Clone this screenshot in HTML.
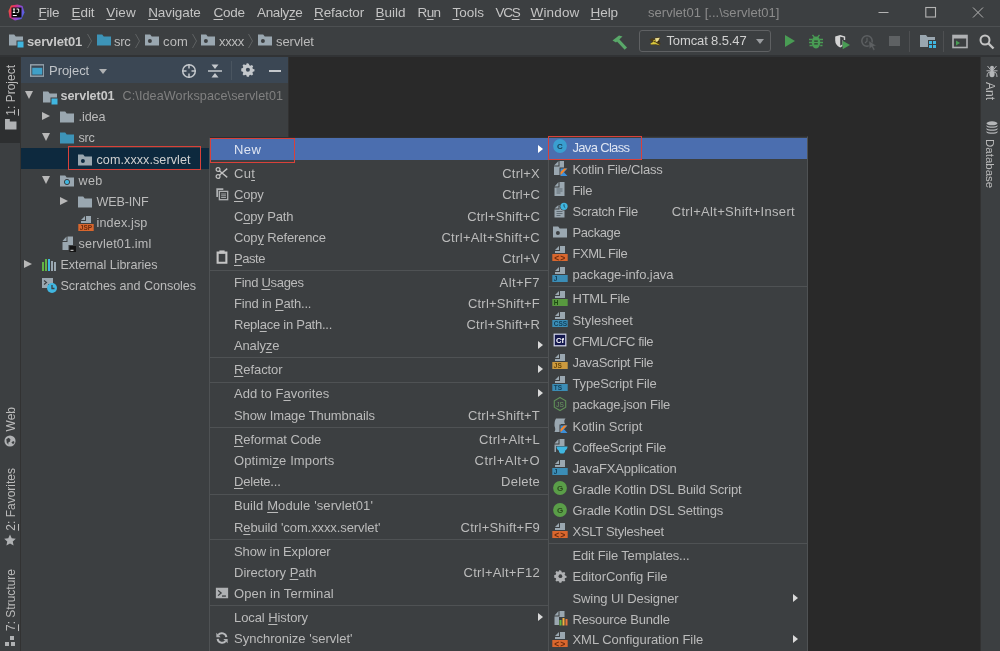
<!DOCTYPE html><html><head><meta charset="utf-8"><title>servlet01</title><style>
*{box-sizing:border-box;margin:0;padding:0}
html,body{width:1000px;height:651px;overflow:hidden;background:#3c3f41}
body{font-family:"Liberation Sans","DejaVu Sans",sans-serif;font-size:13px;color:#bbbbbb;position:relative}
u{text-decoration:underline;text-underline-offset:2px;text-decoration-thickness:1px}
#menubar,#nav,#lstripe,#rstripe,#proj,#ctx,#sub{will-change:transform}
.abs{position:absolute}
.tr{font-size:12.6px}
.t{position:absolute;white-space:nowrap;line-height:20px;height:20px}
#menubar{position:absolute;left:0;top:0;width:1000px;height:27px;background:#3c3f41}
#menubar .t{top:3px;font-size:13.5px;color:#c4c4c4}
#nav{position:absolute;left:0;top:26px;width:1000px;height:31px;background:#3c3f41;border-top:1px solid #4d5052;border-bottom:2px solid #313335}
#lstripe{position:absolute;left:0;top:57px;width:21px;height:594px;background:#3c3f41;border-right:1px solid #323232}
#rstripe{position:absolute;left:980px;top:57px;width:20px;height:594px;background:#3c3f41;border-left:1px solid #323232}
#editor{position:absolute;left:289px;top:57px;width:691px;height:594px;background:#292929}
#proj{position:absolute;left:21px;top:57px;width:268px;height:594px;background:#3c3f41;border-right:1px solid #323232}
#projhead{position:absolute;left:0;top:0;width:267px;height:26px;background:#3b4754}
.vt{position:absolute;white-space:nowrap;font-size:12px;color:#bbbbbb;line-height:14px;writing-mode:vertical-rl}
.vl{transform:rotate(180deg)}
.vt u{text-underline-offset:0px}
#ctx{position:absolute;left:209px;top:137px;width:340px;height:520px;background:#3c3f41;border:1px solid #4f5254;border-top-color:#2e2f30}
#sub{position:absolute;left:548px;top:136px;width:260px;height:520px;background:#3c3f41;border:1px solid #4f5254;border-top-color:#2e2f30}
#sub .mi .l{left:23.5px}
.mi{position:absolute;left:0;right:0;height:21px}
.mi .l{position:absolute;left:24px;top:0;line-height:21px;white-space:nowrap;color:#bbbbbb}
.mi .r{position:absolute;right:8px;top:0;line-height:21px;white-space:nowrap;color:#bbbbbb}
.mi.sel{background:#4b6eaf}
.mi.sel .l{color:#dfe5f2}
.mi.sel .arr{border-left-color:#ffffff}
.sep{position:absolute;left:0;right:0;height:1px;background:#4f5254}
.arr{position:absolute;right:5px;top:6px;width:0;height:0;border-left:5px solid #dadada;border-top:4.5px solid transparent;border-bottom:4.5px solid transparent}
.ic{position:absolute;left:5px;top:2.8px;width:14px;height:14px}
#sub .ic{left:3px;top:1.5px;width:16px;height:16px}
.redbox{position:absolute;border:1px solid #d9413a}
</style></head><body>
<div id="menubar">
<svg class="abs" style="left:7.500px;top:3.500px" width="17" height="17" viewBox="0 0 17 17"><defs><linearGradient id="lg1" x1="0" y1="0.300" x2="1" y2="0.700"><stop offset="0" stop-color="#f0573a"/><stop offset=".25" stop-color="#e2306a"/><stop offset=".55" stop-color="#9a44c8"/><stop offset="1" stop-color="#4468e8"/></linearGradient></defs><path d="M3 1.500L9.500 .500 14.500 2 16.500 8.500 13.500 15 7 16.500 1.500 13.500 .500 7z" fill="url(#lg1)"/><rect x="3.500" y="3.500" width="10" height="10" fill="#0c0c0c"/><rect x="4.800" y="11" width="4" height="1" fill="#fff"/><path d="M4.800 5h2.400M6 5v3.500M4.800 8.500h2.400" stroke="#fff" stroke-width="1" fill="none"/><path d="M8.500 5h2.200v2.600q0 1-1.200 1h-.8" stroke="#fff" stroke-width="1" fill="none"/></svg>
<div class="t" id="f1" style="left:38.6px;letter-spacing:-0.293px;"><u>F</u>ile</div>
<div class="t" id="f2" style="left:71.6px;letter-spacing:-0.097px;"><u>E</u>dit</div>
<div class="t" id="f3" style="left:106.3px;letter-spacing:0.117px;"><u>V</u>iew</div>
<div class="t" id="f4" style="left:148.2px;letter-spacing:-0.088px;"><u>N</u>avigate</div>
<div class="t" id="f5" style="left:213.5px;letter-spacing:-0.271px;"><u>C</u>ode</div>
<div class="t" id="f6" style="left:257.0px;letter-spacing:-0.364px;">Analy<u>z</u>e</div>
<div class="t" id="f7" style="left:314.0px;letter-spacing:-0.129px;"><u>R</u>efactor</div>
<div class="t" id="f8" style="left:375.5px;letter-spacing:-0.006px;"><u>B</u>uild</div>
<div class="t" id="f9" style="left:417.5px;letter-spacing:-0.594px;">R<u>u</u>n</div>
<div class="t" id="f10" style="left:452.5px;letter-spacing:-0.006px;"><u>T</u>ools</div>
<div class="t" id="f11" style="left:495.5px;letter-spacing:-1.255px;">VC<u>S</u></div>
<div class="t" id="f12" style="left:530.5px;letter-spacing:0.164px;"><u>W</u>indow</div>
<div class="t" id="f13" style="left:590.5px;letter-spacing:-0.070px;"><u>H</u>elp</div>
<div class="t" id="f14" style="left:648px;color:#8c8c8c;font-size:13px;letter-spacing:0.028px;">servlet01 [...\servlet01]</div>
<svg class="abs" style="left:870px;top:-0.800px" width="130" height="27" viewBox="0 0 130 27"><path d="M8.500 13.500h10" stroke="#b4b4b4" stroke-width="1"/><rect x="55.800" y="8.500" width="9.700" height="9.500" fill="none" stroke="#b4b4b4" stroke-width="1.100"/><path d="M103 8.500l10 10M113 8.500l-10 10" stroke="#b4b4b4" stroke-width="1"/></svg>
</div>
<div id="nav">
<svg class="abs" style="left:8px;top:5px" width="16" height="16" viewBox="0 0 16 16"><path d="M1 2.5h5.2l1.5 2H15v9H1z" fill="#9aa7b0"/><rect x="8.5" y="8.5" width="7.5" height="7.5" fill="#3c3f41"/><rect x="9.5" y="9.5" width="6" height="6" fill="#40b6e0"/></svg>
<div class="t" id="f15" style="left:27px;top:5px;font-weight:bold;color:#c8c8c8;letter-spacing:-0.142px;">servlet01</div>
<svg class="abs" style="left:96px;top:5px" width="16" height="16" viewBox="0 0 16 16"><path d="M1 2.5h5.2l1.5 2H15v9H1z" fill="#3d94b8"/></svg>
<div class="t" id="f16" style="left:114px;top:5px;letter-spacing:-0.246px;">src</div>
<svg class="abs" style="left:144px;top:5px" width="16" height="16" viewBox="0 0 16 16"><path d="M1 2.5h5.2l1.5 2H15v9H1z" fill="#9aa7b0"/><circle cx="5.900" cy="8.900" r="2" fill="#3c3f41"/></svg>
<div class="t" id="f17" style="left:163px;top:5px;letter-spacing:0.176px;">com</div>
<svg class="abs" style="left:200px;top:5px" width="16" height="16" viewBox="0 0 16 16"><path d="M1 2.5h5.2l1.5 2H15v9H1z" fill="#9aa7b0"/><circle cx="5.900" cy="8.900" r="2" fill="#3c3f41"/></svg>
<div class="t" id="f18" style="left:219px;top:5px;letter-spacing:-0.227px;">xxxx</div>
<svg class="abs" style="left:257px;top:5px" width="16" height="16" viewBox="0 0 16 16"><path d="M1 2.5h5.2l1.5 2H15v9H1z" fill="#9aa7b0"/><circle cx="5.900" cy="8.900" r="2" fill="#3c3f41"/></svg>
<div class="t" id="f19" style="left:276px;top:5px;letter-spacing:-0.056px;">servlet</div>
<svg class="abs" style="left:86px;top:4px" width="8" height="20" viewBox="0 0 8 20"><path d="M1.5 3l4 7-4 7" fill="none" stroke="#5e6162" stroke-width="1"/></svg>
<svg class="abs" style="left:134px;top:4px" width="8" height="20" viewBox="0 0 8 20"><path d="M1.5 3l4 7-4 7" fill="none" stroke="#5e6162" stroke-width="1"/></svg>
<svg class="abs" style="left:191px;top:4px" width="8" height="20" viewBox="0 0 8 20"><path d="M1.5 3l4 7-4 7" fill="none" stroke="#5e6162" stroke-width="1"/></svg>
<svg class="abs" style="left:247px;top:4px" width="8" height="20" viewBox="0 0 8 20"><path d="M1.5 3l4 7-4 7" fill="none" stroke="#5e6162" stroke-width="1"/></svg>
<div class="abs" style="left:0;top:0.5px;width:1000px;height:0">
<svg class="abs" style="left:611px;top:5px" width="18" height="18" viewBox="0 0 18 18"><path d="M1.500 7.500L8 2.500l3.500 1L5 9.500z" fill="#59a869"/><path d="M7.800 5.800l8.200 8.700-2.300 2.300L5.500 8z" fill="#59a869"/></svg>
<div class="abs" style="left:639px;top:2px;width:132px;height:22px;border:1px solid #5f6163;border-radius:3px"></div>
<svg class="abs" style="left:649px;top:9.500px" width="12" height="9.500" viewBox="0 0 12 9.500"><path d="M.500 2.500l3-1.500 2 1L7 .300h4.500L10 4l1.500 2.500-1 2.500-4-1.500-5 .500L3 5z" fill="#4a3a18"/><path d="M1.500 6.500l3.500-2 2 1.200L11 8.300l-4.200-1L1.800 7.500z" fill="#d8c83c"/><path d="M6 1.200l4.800-.400L9 4.300 6.800 5z" fill="#e8dc90"/><path d="M4 3.500l2-.800.800 2.500-1.500.300z" fill="#c8b030"/><circle cx="5.800" cy="4.600" r=".600" fill="#1a1208"/><circle cx="9.800" cy="4.600" r=".600" fill="#1a1208"/></svg>
<div class="t" id="f20" style="left:666.5px;top:3.5px;color:#d0d0d0;letter-spacing:-0.128px;">Tomcat 8.5.47</div>
<div class="abs" style="left:756px;top:11px;width:0;height:0;border-top:5px solid #9a9da0;border-left:4.5px solid transparent;border-right:4.5px solid transparent"></div>
<svg class="abs" style="left:783px;top:6px" width="14" height="14" viewBox="0 0 14 14"><path d="M2 1l10 6-10 6z" fill="#499c54"/></svg>
<svg class="abs" style="left:808px;top:6px" width="16" height="16" viewBox="0 0 16 16"><path d="M4.500 1l1.800 2.200M11.500 1L9.700 3.200" stroke="#499c54" stroke-width="1.300"/><path d="M8 2.500c2.800 0 4.200 2 4.200 5.500S10.800 14.500 8 14.500 3.800 11.500 3.800 8 5.200 2.500 8 2.500z" fill="#499c54"/><path d="M1 5.500h14M1 8.500h14M1.500 11.500h13" stroke="#499c54" stroke-width="1.600" stroke-dasharray="3.300 7.400 3.300 20"/><path d="M6.200 7.200h3.600M6.200 9.800h3.600" stroke="#2f3a31" stroke-width="1.300"/></svg>
<svg class="abs" style="left:834px;top:6px" width="17" height="17" viewBox="0 0 17 17"><path d="M1.200 2.500l5-1.500 5 1.500v3.500H8.500v6.200L6.200 13.500Q1.200 11 1.200 6.500z" fill="#d4d4d4"/><path d="M6.200 2.800v9l2-1.200V6h1.600V3.500z" fill="#3c3f41"/><path d="M8.700 6.800l7.300 4.200-7.300 4.200z" fill="#499c54"/></svg>
<svg class="abs" style="left:860px;top:6px" width="18" height="18" viewBox="0 0 18 18"><circle cx="7" cy="7" r="5.200" fill="none" stroke="#5d6062" stroke-width="1.500"/><path d="M7 3.800v3.400L5 9" stroke="#5d6062" stroke-width="1.200" fill="none"/><path d="M8.800 6.700l7.700 5-3.200.600 1.800 3.300-1.700.900-1.800-3.400-2.300 2z" fill="#5d6062" stroke="#3c3f41" stroke-width=".6"/></svg>
<div class="abs" style="left:889px;top:8px;width:10.5px;height:10px;background:#5e6163"></div>
<div class="abs" style="left:909px;top:3px;width:1px;height:21px;background:#4e5052"></div>
<svg class="abs" style="left:920px;top:6px" width="17" height="15" viewBox="0 0 17 15"><path d="M0 1h6l1.500 2H15v10H0z" fill="#9aa7b0"/><rect x="8" y="6" width="8" height="8" fill="#3c3f41"/><rect x="9" y="7" width="3" height="3" fill="#40b6e0"/><rect x="13" y="7" width="3" height="3" fill="#40b6e0"/><rect x="9" y="11" width="3" height="3" fill="#40b6e0"/><rect x="13" y="11" width="3" height="3" fill="#40b6e0"/></svg>
<div class="abs" style="left:943px;top:3px;width:1px;height:21px;background:#4e5052"></div>
<svg class="abs" style="left:952px;top:6px" width="16" height="15" viewBox="0 0 16 15"><rect x="1" y="1.500" width="14" height="12" fill="none" stroke="#afb1b3" stroke-width="1.600"/><rect x="1" y="1.500" width="14" height="3" fill="#afb1b3"/><path d="M4 6.500l4 2.500-4 2.500z" fill="#499c54"/></svg>
<svg class="abs" style="left:978px;top:5px" width="17" height="17" viewBox="0 0 17 17"><circle cx="7" cy="7" r="4.500" fill="none" stroke="#c4c4c4" stroke-width="2"/><path d="M10.500 10.500l5 5" stroke="#c4c4c4" stroke-width="2.400"/></svg>
</div>
</div>
<div id="lstripe">
<div class="abs" style="left:0;top:0;width:20px;height:86px;background:#2d2f30"></div>
<div class="vt vl" id="vt1" style="left:4px;top:8px"><u>1</u>: Project</div>
<svg class="abs" style="left:5px;top:62px" width="11.500" height="10.500" viewBox="0 0 12 11"><path d="M0 0h5v2.500h7V11H0z" fill="#afb1b3"/></svg>
<div class="vt vl" id="vt2" style="left:4px;top:350px">Web</div>
<svg class="abs" style="left:4px;top:378px" width="12" height="12" viewBox="0 0 13 13"><circle cx="6.500" cy="6.500" r="6" fill="#afb1b3"/><path d="M2.500 4.500l2.500-1.500 2 1.500-.500 2.500-2 1.500 .500 2-2-2zM8 8l2-1.500 1.500 1-1.500 2.500z" fill="#3c3f41"/></svg>
<div class="vt vl" id="vt3" style="left:4px;top:411px"><u>2</u>: Favorites</div>
<svg class="abs" style="left:4px;top:477px" width="12" height="12" viewBox="0 0 14 14"><path d="M7 .500l2 4.500 4.800.500-3.600 3.200 1 4.800L7 11l-4.200 2.500 1-4.800L.200 5.500 5 5z" fill="#afb1b3"/></svg>
<div class="vt vl" id="vt4" style="left:4px;top:512px"><u>7</u>: Structure</div>
<svg class="abs" style="left:5px;top:579px" width="10" height="10" viewBox="0 0 10 10"><rect x="5" y="0" width="4" height="4" fill="#afb1b3"/><rect x="0" y="6" width="4" height="4" fill="#afb1b3"/><rect x="6" y="6" width="4" height="4" fill="#afb1b3"/></svg>
</div>
<div id="rstripe">
<svg class="abs" style="left:4.500px;top:7.500px" width="12" height="13" viewBox="0 0 12 13"><circle cx="6" cy="2.800" r="2" fill="#b4b6b8"/><ellipse cx="6" cy="9" rx="2.600" ry="3.300" fill="#b4b6b8"/><rect x="5" y="3.500" width="2" height="3.500" fill="#b4b6b8"/><path d="M1.500 1l3.300 4M10.500 1L7.200 5M.500 5.800h11M4.500 7C2 7 1.200 8.500 1 12M7.500 7c2.500 0 3.300 1.500 3.500 5" stroke="#b4b6b8" stroke-width="1" fill="none"/></svg>
<div class="vt" id="vt5" style="left:2px;top:25px">Ant</div>
<svg class="abs" style="left:4.500px;top:63.500px" width="12" height="13" viewBox="0 0 12 13"><ellipse cx="6" cy="2.300" rx="5.500" ry="2" fill="#b4b6b8"/><path d="M.500 4c1 2 10 2 11 0v1.200c-1 2-10 2-11 0zM.500 7c1 2 10 2 11 0v1.200c-1 2-10 2-11 0zM.500 10c1 2 10 2 11 0v1.200c-1 2-10 2-11 0z" fill="#b4b6b8"/></svg>
<div class="vt" id="vt6" style="left:2px;top:82px;font-size:11.5px">Database</div>
</div>
<div id="editor"></div>
<div id="proj">
<div id="projhead">
<svg class="abs" style="left:8.500px;top:6.500px" width="14.500" height="13" viewBox="0 0 16 14"><rect x="0.750" y="0.750" width="14.500" height="12.500" fill="none" stroke="#9aa7b0" stroke-width="1.500"/><rect x="2.500" y="4" width="11" height="7.500" fill="#40a0c8"/></svg>
<div class="t" id="f21" style="left:28px;top:4px;color:#c0c4c8;letter-spacing:-0.038px;">Project</div>
<div class="abs" style="left:77.500px;top:12px;width:0;height:0;border-top:5px solid #afb1b3;border-left:4.500px solid transparent;border-right:4.500px solid transparent"></div>
<svg class="abs" style="left:160px;top:6px" width="16" height="16" viewBox="0 0 16 16"><circle cx="8" cy="8" r="6.300" fill="none" stroke="#c4c8cc" stroke-width="1.500"/><path d="M8 1v4.500M8 10.500V15M1 8h4.500M10.500 8H15" stroke="#c4c8cc" stroke-width="1.500"/></svg>
<svg class="abs" style="left:186px;top:6px" width="16" height="16" viewBox="0 0 16 16"><path d="M1 8h14" stroke="#c4c8cc" stroke-width="1.500"/><path d="M4.500 1.500h7L8 6zM4.500 14.500h7L8 10z" fill="#c4c8cc"/></svg>
<div class="abs" style="left:210px;top:4px;width:1px;height:19px;background:#4a5560"></div>
<svg class="abs" style="left:220px;top:6px" width="14" height="14" viewBox="0 0 16 16"><path d="M8 1.200l1.200.200.500 1.800 1.300.600 1.700-.900 1.500 1.500-.900 1.700.600 1.300 1.800.500v2.200l-1.800.500-.600 1.300.900 1.700-1.500 1.500-1.700-.900-1.300.600-.500 1.800H6.800l-.500-1.800-1.300-.600-1.700.900-1.500-1.500.900-1.700-.600-1.300-1.800-.500V6.900l1.800-.500.600-1.300-.900-1.700 1.500-1.500 1.700.900 1.300-.600.500-1.800z" fill="#c4c8cc" transform="translate(0,-.500) scale(.98)"/><circle cx="7.900" cy="7.600" r="2.300" fill="#3b4754"/></svg>
<div class="abs" style="left:248px;top:13px;width:12px;height:2px;background:#c4c8cc"></div>
</div>
<div class="abs" style="left:0;top:91px;width:267px;height:21px;background:#0d293e"></div>
<div class="abs" style="left:4px;top:34.2px;width:0;height:0;border-top:8px solid #b8b8b8;border-left:4.300px solid transparent;border-right:4.300px solid transparent"></div>
<svg class="abs" style="left:21px;top:31.7px" width="16" height="16" viewBox="0 0 16 16"><path d="M1 2.5h5.2l1.5 2H15v9H1z" fill="#9aa7b0"/><rect x="8.5" y="8.5" width="7.5" height="7.5" fill="#3c3f41"/><rect x="9.5" y="9.5" width="6" height="6" fill="#40b6e0"/></svg>
<div class="t tr" id="f22" style="left:39.5px;top:29.2px;font-weight:bold;color:#c8c8c8;letter-spacing:-0.069px;">servlet01</div>
<div class="t tr" id="f23" style="left:101.5px;top:29.2px;color:#808080;letter-spacing:0.105px;">C:\IdeaWorkspace\servlet01</div>
<div class="abs" style="left:21px;top:55.099999999999994px;width:0;height:0;border-left:8px solid #b8b8b8;border-top:4.500px solid transparent;border-bottom:4.500px solid transparent"></div>
<svg class="abs" style="left:38px;top:52.3px" width="16" height="16" viewBox="0 0 16 16"><path d="M1 2.5h5.2l1.5 2H15v9H1z" fill="#9aa7b0"/></svg>
<div class="t tr" id="f24" style="left:57.5px;top:50.3px;letter-spacing:-0.062px;">.idea</div>
<div class="abs" style="left:21.4px;top:76.4px;width:0;height:0;border-top:8px solid #b8b8b8;border-left:4.300px solid transparent;border-right:4.300px solid transparent"></div>
<svg class="abs" style="left:38px;top:73.4px" width="16" height="16" viewBox="0 0 16 16"><path d="M1 2.5h5.2l1.5 2H15v9H1z" fill="#3d94b8"/></svg>
<div class="t tr" id="f25" style="left:57.5px;top:71.4px;letter-spacing:-0.266px;">src</div>
<svg class="abs" style="left:56px;top:94.5px" width="16" height="16" viewBox="0 0 16 16"><path d="M1 2.5h5.2l1.5 2H15v9H1z" fill="#9aa7b0"/><circle cx="5.900" cy="8.900" r="2" fill="#0d293e"/></svg>
<div class="t tr" id="f26" style="left:75.5px;top:92.5px;color:#d0d0d0;letter-spacing:0.058px;">com.xxxx.servlet</div>
<div class="abs" style="left:21.4px;top:118.6px;width:0;height:0;border-top:8px solid #b8b8b8;border-left:4.300px solid transparent;border-right:4.300px solid transparent"></div>
<svg class="abs" style="left:38px;top:115.6px" width="16" height="16" viewBox="0 0 16 16"><path d="M1 2.5h5.2l1.5 2H15v9H1z" fill="#9aa7b0"/><circle cx="8" cy="9" r="2.600" fill="#40b6e0" stroke="#3c3f41" stroke-width="1"/></svg>
<div class="t tr" id="f27" style="left:57.5px;top:113.6px;letter-spacing:0.297px;">web</div>
<div class="abs" style="left:39px;top:139.5px;width:0;height:0;border-left:8px solid #b8b8b8;border-top:4.500px solid transparent;border-bottom:4.500px solid transparent"></div>
<svg class="abs" style="left:56px;top:136.7px" width="16" height="16" viewBox="0 0 16 16"><path d="M1 2.5h5.2l1.5 2H15v9H1z" fill="#9aa7b0"/></svg>
<div class="t tr" id="f28" style="left:75.5px;top:134.7px;letter-spacing:-0.167px;">WEB-INF</div>
<svg class="abs" style="left:57px;top:157.8px" width="16" height="16" viewBox="0 0 16 16"><path d="M8 1h5v7H3V6h5z" fill="#9aa7b0"/><path d="M7 1v4H3z" fill="#9aa7b0"/><rect x="0.300" y="9" width="15.400" height="7" fill="#d9672e"/><text x="1.8" y="15" font-size="6.5"  font-weight="bold" font-family="Liberation Sans,sans-serif" fill="#6b2a0c">JSP</text></svg>
<div class="t tr" id="f29" style="left:75.5px;top:155.8px;letter-spacing:0.144px;">index.jsp</div>
<svg class="abs" style="left:38.500px;top:179.4px" width="16" height="16" viewBox="0 0 16 16"><path d="M7.500 0.500H13v13.500H2.500V6h5z" fill="#9aa7b0"/><path d="M6.500 0.500V5H2.500z" fill="#9aa7b0"/><rect x="8.500" y="9" width="7.500" height="7" fill="#3c3f41"/><rect x="9.500" y="10" width="6.500" height="6" fill="#141414"/><rect x="10.500" y="13.800" width="3" height="1" fill="#e0e0e0"/></svg>
<div class="t tr" id="f30" style="left:57.5px;top:176.9px;letter-spacing:0.177px;">servlet01.iml</div>
<div class="abs" style="left:3px;top:202.8px;width:0;height:0;border-left:8px solid #b8b8b8;border-top:4.500px solid transparent;border-bottom:4.500px solid transparent"></div>
<svg class="abs" style="left:20px;top:200.0px" width="16" height="16" viewBox="0 0 16 16"><rect x="1" y="5" width="2" height="9" fill="#62b543"/><rect x="4" y="2" width="2" height="12" fill="#62b543"/><rect x="7" y="2" width="2" height="12" fill="#40b6e0"/><rect x="10" y="4" width="2" height="10" fill="#9aa7b0"/><rect x="13" y="5" width="2" height="9" fill="#9aa7b0"/></svg>
<div class="t tr" id="f31" style="left:39.5px;top:198.0px;letter-spacing:-0.056px;">External Libraries</div>
<svg class="abs" style="left:20px;top:220.1px" width="17" height="17" viewBox="0 0 17 17"><path d="M1 1h11v6H7v4H1z" fill="#9aa7b0"/><path d="M3 3.500l2.500 2L3 7.500" stroke="#3c3f41" stroke-width="1.200" fill="none"/><circle cx="11" cy="11" r="5" fill="#40b6e0"/><path d="M11 8v3.500h2.500" stroke="#3c3f41" stroke-width="1.300" fill="none"/></svg>
<div class="t tr" id="f32" style="left:39.5px;top:219.1px;letter-spacing:-0.042px;">Scratches and Consoles</div>
</div>
<div class="redbox" style="left:68px;top:146px;width:133px;height:24px"></div>
<div id="ctx">
<div class="mi sel" style="top:0;height:22px">
<span class="l" id="f33" style="top:0.8px;letter-spacing:0.394px;">New</span>
<span class="arr" style="top:6.8px"></span>
</div>
<div class="mi" style="top:25.2px">
<svg class="ic" viewBox="0 0 16 16"><circle cx="3.500" cy="4" r="2.200" fill="none" stroke="#c0c0c0" stroke-width="1.400"/><circle cx="3.500" cy="12" r="2.200" fill="none" stroke="#c0c0c0" stroke-width="1.400"/><path d="M5 5.500l9 7.500M5 10.500L14 3" stroke="#c0c0c0" stroke-width="1.500"/></svg>
<span class="l" id="f34" style="top:0px;letter-spacing:0.250px;">Cu<u>t</u></span>
<span class="r" id="f35" style="letter-spacing:0.220px;">Ctrl+X</span>
</div>
<div class="mi" style="top:46.4px">
<svg class="ic" viewBox="0 0 16 16"><path d="M1.500 1.500h8v2h-6v8h-2z" fill="#afb1b3"/><rect x="5" y="5" width="9.500" height="9.500" fill="none" stroke="#afb1b3" stroke-width="1.500"/><path d="M7 8h5.500M7 10h5.500M7 12h5.500" stroke="#afb1b3" stroke-width="1"/></svg>
<span class="l" id="f36" style="top:0px;letter-spacing:-0.166px;"><u>C</u>opy</span>
<span class="r" id="f37" style="letter-spacing:0.100px;">Ctrl+C</span>
</div>
<div class="mi" style="top:67.6px">
<span class="l" id="f38" style="top:0px;letter-spacing:-0.169px;">C<u>o</u>py Path</span>
<span class="r" id="f39" style="letter-spacing:0.166px;">Ctrl+Shift+C</span>
</div>
<div class="mi" style="top:88.6px">
<span class="l" id="f40" style="top:0px;letter-spacing:-0.161px;">Cop<u>y</u> Reference</span>
<span class="r" id="f41" style="letter-spacing:0.314px;">Ctrl+Alt+Shift+C</span>
</div>
<div class="mi" style="top:109.7px">
<svg class="ic" viewBox="0 0 16 16"><path d="M3 3h10v11.500H3z" fill="none" stroke="#c4c4c4" stroke-width="2.400"/><rect x="5" y=".500" width="6" height="3.500" fill="#c4c4c4"/></svg>
<span class="l" id="f42" style="top:0px;letter-spacing:-0.453px;"><u>P</u>aste</span>
<span class="r" id="f43" style="letter-spacing:0.220px;">Ctrl+V</span>
</div>
<div class="mi" style="top:134px">
<span class="l" id="f44" style="top:0px;letter-spacing:-0.300px;">Find <u>U</u>sages</span>
<span class="r" id="f45" style="letter-spacing:0.409px;">Alt+F7</span>
</div>
<div class="mi" style="top:154.9px">
<span class="l" id="f46" style="top:0px;letter-spacing:-0.202px;">Find in <u>P</u>ath...</span>
<span class="r" id="f47" style="letter-spacing:0.229px;">Ctrl+Shift+F</span>
</div>
<div class="mi" style="top:176px">
<span class="l" id="f48" style="top:0px;letter-spacing:-0.258px;">Repl<u>a</u>ce in Path...</span>
<span class="r" id="f49" style="letter-spacing:0.224px;">Ctrl+Shift+R</span>
</div>
<div class="mi" style="top:197.1px">
<span class="l" id="f50" style="top:0px;letter-spacing:-0.152px;">Analy<u>z</u>e</span>
<span class="arr" style="top:6px"></span>
</div>
<div class="mi" style="top:221.4px">
<span class="l" id="f51" style="top:0px;letter-spacing:-0.080px;"><u>R</u>efactor</span>
<span class="arr" style="top:6px"></span>
</div>
<div class="mi" style="top:245.3px">
<span class="l" id="f52" style="top:0px;letter-spacing:0.033px;">Add to F<u>a</u>vorites</span>
<span class="arr" style="top:6px"></span>
</div>
<div class="mi" style="top:266.5px">
<span class="l" id="f53" style="top:0px;letter-spacing:-0.088px;">Show Image Thumbnails</span>
<span class="r" id="f54" style="letter-spacing:0.229px;">Ctrl+Shift+T</span>
</div>
<div class="mi" style="top:291px">
<span class="l" id="f55" style="top:0px;letter-spacing:-0.074px;"><u>R</u>eformat Code</span>
<span class="r" id="f56" style="letter-spacing:0.319px;">Ctrl+Alt+L</span>
</div>
<div class="mi" style="top:312.3px">
<span class="l" id="f57" style="top:0px;letter-spacing:0.134px;">Optimi<u>z</u>e Imports</span>
<span class="r" id="f58" style="letter-spacing:0.470px;">Ctrl+Alt+O</span>
</div>
<div class="mi" style="top:333.4px">
<span class="l" id="f59" style="top:0px;letter-spacing:-0.203px;"><u>D</u>elete...</span>
<span class="r" id="f60" style="letter-spacing:0.219px;">Delete</span>
</div>
<div class="mi" style="top:357.3px">
<span class="l" id="f61" style="top:0px;letter-spacing:0.104px;">Build <u>M</u>odule 'servlet01'</span>
</div>
<div class="mi" style="top:378.7px">
<span class="l" id="f62" style="top:0px;letter-spacing:-0.094px;">R<u>e</u>build 'com.xxxx.servlet'</span>
<span class="r" id="f63" style="letter-spacing:0.216px;">Ctrl+Shift+F9</span>
</div>
<div class="mi" style="top:402.7px">
<span class="l" id="f64" style="top:0px;letter-spacing:-0.105px;">Show in Explorer</span>
</div>
<div class="mi" style="top:423.9px">
<span class="l" id="f65" style="top:0px;letter-spacing:0.002px;">Directory <u>P</u>ath</span>
<span class="r" id="f66" style="letter-spacing:0.293px;">Ctrl+Alt+F12</span>
</div>
<div class="mi" style="top:444.8px">
<svg class="ic" viewBox="0 0 16 16"><rect x="1" y="2" width="14" height="12" fill="#afb1b3"/><path d="M3.500 5l3.500 3-3.500 3" stroke="#3c3f41" stroke-width="1.500" fill="none"/><path d="M8 11.500h4.500" stroke="#3c3f41" stroke-width="1.500"/></svg>
<span class="l" id="f67" style="top:0px;letter-spacing:0.110px;">Open in Terminal</span>
</div>
<div class="mi" style="top:469px">
<span class="l" id="f68" style="top:0px;letter-spacing:-0.089px;">Local <u>H</u>istory</span>
<span class="arr" style="top:6px"></span>
</div>
<div class="mi" style="top:490px">
<svg class="ic" viewBox="0 0 16 16"><path d="M13 7A5.200 5.200 0 0 0 3.800 4.500" fill="none" stroke="#b8babc" stroke-width="2.300"/><path d="M3 9a5.200 5.200 0 0 0 9.200 2.500" fill="none" stroke="#b8babc" stroke-width="2.300"/><path d="M1.500 2v5h5zM14.500 14V9h-5z" fill="#afb1b3"/></svg>
<span class="l" id="f69" style="top:0px;letter-spacing:0.004px;">Synchronize 'servlet'</span>
</div>
<div class="sep" style="top:132.0px"></div>
<div class="sep" style="top:219.2px"></div>
<div class="sep" style="top:243.5px"></div>
<div class="sep" style="top:289.0px"></div>
<div class="sep" style="top:355.5px"></div>
<div class="sep" style="top:400.8px"></div>
<div class="sep" style="top:467.3px"></div>
</div>
<div class="redbox" style="left:210px;top:138px;width:85px;height:25px"></div>
<div id="sub">
<div class="mi sel" style="top:1px;height:21px">
<svg class="ic" style="top:0.19999999999999996px" viewBox="0 0 16 16"><circle cx="8" cy="8" r="6.900" fill="#3a9fd0"/><text x="8" y="10.800" font-size="8" font-weight="bold" font-family="Liberation Sans,sans-serif" text-anchor="middle" fill="#17425a">C</text></svg>
<span class="l" id="f70" style="top:-0.8px;letter-spacing:-0.679px;">Java Class</span>
</div>
<div class="mi" style="top:21.5px">
<svg class="ic" viewBox="0 0 16 16"><path d="M7.500 1H12v14H2V6.500h5.500z" fill="#9aa7b0"/><path d="M6.500 1v4.500H2z" fill="#9aa7b0"/><rect x="7.500" y="7.500" width="8.500" height="8.500" fill="#3c3f41"/><path d="M8.500 8.500h7l-3.500 3.700 3.500 3.800h-7z" fill="#3c8fd9"/><path d="M8.500 15.200L15 8.500h-3L8.500 12z" fill="#f5862a"/></svg>
<span class="l" id="f71" style="top:0px;letter-spacing:-0.183px;">Kotlin File/Class</span>
</div>
<div class="mi" style="top:42.5px">
<svg class="ic" viewBox="0 0 16 16"><path d="M7.500 1H12.500v14H2.500V6.500h5z" fill="#9aa7b0"/><path d="M6.500 1v4.500H2.500z" fill="#9aa7b0"/><path d="M4.500 8h6M4.500 10h6M4.500 12h4" stroke="#5f6b73" stroke-width="1"/></svg>
<span class="l" id="f72" style="top:0px;letter-spacing:-0.363px;">File</span>
</div>
<div class="mi" style="top:63.8px">
<svg class="ic" viewBox="0 0 16 16"><path d="M7.500 3H12.500v12.500H2.500V7.500h5z" fill="#9aa7b0"/><path d="M6.500 3v3.500H2.500z" fill="#9aa7b0"/><path d="M4.500 9.500h6M4.500 11.500h6M4.500 13.500h4" stroke="#5f6b73" stroke-width="1"/><circle cx="12" cy="4.300" r="4.300" fill="#3c3f41"/><circle cx="12" cy="4.300" r="3.600" fill="#40b6e0"/><path d="M12 2.300v2.200l1.300 1.200" stroke="#1d4a5e" stroke-width="1" fill="none"/></svg>
<span class="l" id="f73" style="top:0px;letter-spacing:-0.271px;">Scratch File</span>
<span class="r" id="f74" style="right:12px;letter-spacing:0.314px;">Ctrl+Alt+Shift+Insert</span>
</div>
<div class="mi" style="top:85.1px">
<svg class="ic" viewBox="0 0 16 16"><path d="M1 2.5h5.2l1.5 2H15v9H1z" fill="#9aa7b0"/><circle cx="5.900" cy="8.900" r="2" fill="#3c3f41"/></svg>
<span class="l" id="f75" style="top:0px;letter-spacing:-0.413px;">Package</span>
</div>
<div class="mi" style="top:106.1px">
<svg class="ic" viewBox="0 0 16 16"><path d="M8 1h5v7H3V6h5z" fill="#9aa7b0"/><path d="M7 1v4H3z" fill="#9aa7b0"/><rect x="0.300" y="9" width="15.400" height="7" fill="#d9672e"/><text x="2.2" y="15.6" font-size="8.5" letter-spacing="1" font-weight="bold" font-family="Liberation Sans,sans-serif" fill="#6b2a0c">&lt;&gt;</text></svg>
<span class="l" id="f76" style="top:0px;letter-spacing:-0.450px;">FXML File</span>
</div>
<div class="mi" style="top:127.4px">
<svg class="ic" viewBox="0 0 16 16"><path d="M8 1h5v7H3V6h5z" fill="#9aa7b0"/><path d="M7 1v4H3z" fill="#9aa7b0"/><rect x="0.300" y="9" width="15.400" height="7" fill="#3b8db6"/><text x="1.8" y="15" font-size="6.5"  font-weight="bold" font-family="Liberation Sans,sans-serif" fill="#123f58">J</text></svg>
<span class="l" id="f77" style="top:0px;letter-spacing:-0.053px;">package-info.java</span>
</div>
<div class="mi" style="top:151.1px">
<svg class="ic" viewBox="0 0 16 16"><path d="M8 1h5v7H3V6h5z" fill="#9aa7b0"/><path d="M7 1v4H3z" fill="#9aa7b0"/><rect x="0.300" y="9" width="15.400" height="7" fill="#58993f"/><text x="1.8" y="15" font-size="6.5"  font-weight="bold" font-family="Liberation Sans,sans-serif" fill="#1c4a12">H</text></svg>
<span class="l" id="f78" style="top:0px;letter-spacing:-0.241px;">HTML File</span>
</div>
<div class="mi" style="top:172.7px">
<svg class="ic" viewBox="0 0 16 16"><path d="M8 1h5v7H3V6h5z" fill="#9aa7b0"/><path d="M7 1v4H3z" fill="#9aa7b0"/><rect x="0.300" y="9" width="15.400" height="7" fill="#3b8db6"/><text x="1.8" y="15" font-size="6.5"  font-weight="bold" font-family="Liberation Sans,sans-serif" fill="#123f58">CSS</text></svg>
<span class="l" id="f79" style="top:0px;letter-spacing:-0.050px;">Stylesheet</span>
</div>
<div class="mi" style="top:193.6px">
<svg class="ic" viewBox="0 0 16 16"><rect x="2.200" y="2.200" width="11.600" height="11.600" fill="#15194f" stroke="#d4d7ee" stroke-width="1.200"/><text x="8" y="11.200" font-size="7.500" font-weight="bold" font-family="Liberation Sans,sans-serif" text-anchor="middle" fill="#fff">Cf</text></svg>
<span class="l" id="f80" style="top:0px;letter-spacing:-0.404px;">CFML/CFC file</span>
</div>
<div class="mi" style="top:214.9px">
<svg class="ic" viewBox="0 0 16 16"><path d="M8 1h5v7H3V6h5z" fill="#9aa7b0"/><path d="M7 1v4H3z" fill="#9aa7b0"/><rect x="0.300" y="9" width="15.400" height="7" fill="#cc9a3e"/><text x="1.8" y="15" font-size="6.5"  font-weight="bold" font-family="Liberation Sans,sans-serif" fill="#6a4708">JS</text></svg>
<span class="l" id="f81" style="top:0px;letter-spacing:-0.304px;">JavaScript File</span>
</div>
<div class="mi" style="top:236.1px">
<svg class="ic" viewBox="0 0 16 16"><path d="M8 1h5v7H3V6h5z" fill="#9aa7b0"/><path d="M7 1v4H3z" fill="#9aa7b0"/><rect x="0.300" y="9" width="15.400" height="7" fill="#3b8db6"/><text x="1.8" y="15" font-size="6.5"  font-weight="bold" font-family="Liberation Sans,sans-serif" fill="#123f58">TS</text></svg>
<span class="l" id="f82" style="top:0px;letter-spacing:-0.126px;">TypeScript File</span>
</div>
<div class="mi" style="top:257.3px">
<svg class="ic" viewBox="0 0 16 16"><path d="M8 1.500l5.700 3.200v6.600L8 14.500l-5.700-3.200V4.700z" fill="none" stroke="#5f9058" stroke-width="1.100"/><text x="8" y="10.500" font-size="6.500" font-family="Liberation Sans,sans-serif" text-anchor="middle" fill="#6a9a62">JS</text></svg>
<span class="l" id="f83" style="top:0px;letter-spacing:-0.211px;">package.json File</span>
</div>
<div class="mi" style="top:278.5px">
<svg class="ic" viewBox="0 0 16 16"><path d="M4 1.500h9.500c-1.500 1.500-1.500 3.500-.500 5.500H9v8H2.500c1-2 1-3.500 0-6 0-3 0-5 1.500-7.500z" fill="#9aa7b0"/><rect x="7.500" y="7.500" width="8.500" height="8.500" fill="#3c3f41"/><path d="M8.500 8.500h7l-3.500 3.700 3.500 3.800h-7z" fill="#3c8fd9"/><path d="M8.500 15.200L15 8.500h-3L8.500 12z" fill="#f5862a"/></svg>
<span class="l" id="f84" style="top:0px;letter-spacing:0.033px;">Kotlin Script</span>
</div>
<div class="mi" style="top:299.5px">
<svg class="ic" viewBox="0 0 16 16"><path d="M7.500 1H12.500v7H4v6H2.500V6.500h5z" fill="#9aa7b0"/><path d="M6.500 1v4.500H2.500z" fill="#9aa7b0"/><path d="M4.500 8.500h11c0 2-1 3.500-2.500 4.200v1.300l-1.500 1.500h-3L7 14v-1.300C5.500 12 4.500 10.500 4.500 8.500z" fill="#40b6e0"/><path d="M5 13.500h10" stroke="#9aa7b0" stroke-width="0"/></svg>
<span class="l" id="f85" style="top:0px;letter-spacing:-0.127px;">CoffeeScript File</span>
</div>
<div class="mi" style="top:320.5px">
<svg class="ic" viewBox="0 0 16 16"><path d="M8 1h5v7H3V6h5z" fill="#9aa7b0"/><path d="M7 1v4H3z" fill="#9aa7b0"/><rect x="0.300" y="9" width="15.400" height="7" fill="#3b8db6"/><text x="1.8" y="15" font-size="6.5"  font-weight="bold" font-family="Liberation Sans,sans-serif" fill="#123f58">J</text></svg>
<span class="l" id="f86" style="top:0px;letter-spacing:-0.222px;">JavaFXApplication</span>
</div>
<div class="mi" style="top:341.8px">
<svg class="ic" viewBox="0 0 16 16"><circle cx="8" cy="8" r="6.900" fill="#5a9e48"/><text x="8" y="10.800" font-size="8" font-weight="bold" font-family="Liberation Sans,sans-serif" text-anchor="middle" fill="#2a4a1c">G</text></svg>
<span class="l" id="f87" style="top:0px;letter-spacing:-0.128px;">Gradle Kotlin DSL Build Script</span>
</div>
<div class="mi" style="top:363.0px">
<svg class="ic" viewBox="0 0 16 16"><circle cx="8" cy="8" r="6.900" fill="#5a9e48"/><text x="8" y="10.800" font-size="8" font-weight="bold" font-family="Liberation Sans,sans-serif" text-anchor="middle" fill="#2a4a1c">G</text></svg>
<span class="l" id="f88" style="top:0px;letter-spacing:-0.137px;">Gradle Kotlin DSL Settings</span>
</div>
<div class="mi" style="top:383.9px">
<svg class="ic" viewBox="0 0 16 16"><path d="M8 1h5v7H3V6h5z" fill="#9aa7b0"/><path d="M7 1v4H3z" fill="#9aa7b0"/><rect x="0.300" y="9" width="15.400" height="7" fill="#d9672e"/><text x="2.2" y="15.6" font-size="8.5" letter-spacing="1" font-weight="bold" font-family="Liberation Sans,sans-serif" fill="#6b2a0c">&lt;&gt;</text></svg>
<span class="l" id="f89" style="top:0px;letter-spacing:-0.289px;">XSLT Stylesheet</span>
</div>
<div class="mi" style="top:407.9px">
<span class="l" id="f90" style="top:0px;letter-spacing:-0.160px;">Edit File Templates...</span>
</div>
<div class="mi" style="top:429.3px">
<svg class="ic" style="width:13px;height:13px;left:4.5px;top:3.5px" viewBox="0 0 16 16"><path d="M8 1.200l1.200.200.500 1.800 1.300.600 1.700-.900 1.500 1.500-.900 1.700.600 1.300 1.800.500v2.200l-1.800.500-.600 1.300.900 1.700-1.500 1.500-1.700-.900-1.300.600-.500 1.800H6.800l-.500-1.800-1.300-.600-1.700.900-1.500-1.500.900-1.700-.600-1.300-1.800-.500V6.900l1.800-.500.600-1.300-.900-1.700 1.500-1.500 1.700.900 1.300-.600.500-1.800z" fill="#afb1b3" transform="translate(0,-.500) scale(.98)"/><circle cx="7.900" cy="7.600" r="2.300" fill="#3c3f41"/></svg>
<span class="l" id="f91" style="top:0px;letter-spacing:-0.070px;">EditorConfig File</span>
</div>
<div class="mi" style="top:450.5px">
<span class="l" id="f92" style="top:0px;letter-spacing:-0.098px;">Swing UI Designer</span>
<span class="arr" style="right:9px"></span>
</div>
<div class="mi" style="top:471.6px">
<svg class="ic" viewBox="0 0 16 16"><path d="M7.500 1H12.500v6H7v8H2.500V6.500h5z" fill="#9aa7b0"/><path d="M6.500 1v4.500H2.500z" fill="#9aa7b0"/><rect x="7.500" y="10" width="2" height="5.500" fill="#62b543"/><rect x="10.500" y="8" width="2" height="7.500" fill="#f4af3d"/><rect x="13.500" y="9" width="2" height="6.500" fill="#e8743b"/></svg>
<span class="l" id="f93" style="top:0px;letter-spacing:-0.169px;">Resource Bundle</span>
</div>
<div class="mi" style="top:492.2px">
<svg class="ic" viewBox="0 0 16 16"><path d="M8 1h5v7H3V6h5z" fill="#9aa7b0"/><path d="M7 1v4H3z" fill="#9aa7b0"/><rect x="0.300" y="9" width="15.400" height="7" fill="#d9672e"/><text x="2.2" y="15.6" font-size="8.5" letter-spacing="1" font-weight="bold" font-family="Liberation Sans,sans-serif" fill="#6b2a0c">&lt;&gt;</text></svg>
<span class="l" id="f94" style="top:0px;letter-spacing:-0.048px;">XML Configuration File</span>
<span class="arr" style="right:9px"></span>
</div>
<div class="sep" style="top:148.7px"></div>
<div class="sep" style="top:406.0px"></div>
</div>
<div class="redbox" style="left:548px;top:136px;width:94px;height:24px"></div>
</body></html>
